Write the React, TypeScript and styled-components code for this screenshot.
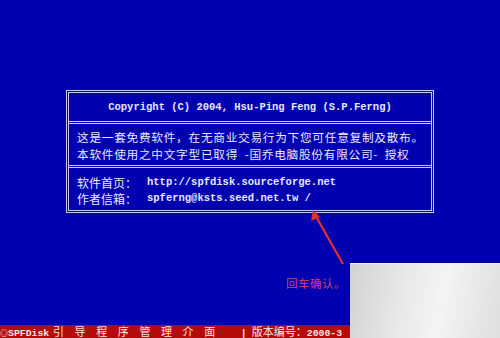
import styled, { createGlobalStyle } from "styled-components";

const GlobalStyle = createGlobalStyle`
  html, body {
    margin: 0;
    padding: 0;
    background: #0000b0;
    overflow: hidden;
  }
`;

const Screen = styled.div`
  position: relative;
  width: 500px;
  height: 338px;
  background: #0000b0;
  display: flex;
  flex-direction: column;
  overflow: hidden;
  font-family: "Liberation Mono", "Noto Sans CJK SC", monospace;
  color: #e8e8ff;
`;

const Dialog = styled.div`
  margin: 90px 0 0 66px;
  width: 368px;
  box-sizing: border-box;
  border: 3px double #c8c8f4;
  display: flex;
  flex-direction: column;
`;

interface SectionProps {
  $height: number;
  $padTop?: number;
  $center?: boolean;
  $divider?: boolean;
}

const Section = styled.div<SectionProps>`
  height: ${(p) => p.$height}px;
  box-sizing: border-box;
  padding: ${(p) => p.$padTop ?? 0}px 0 0 ${(p) => (p.$center ? 0 : 8)}px;
  display: flex;
  flex-direction: column;
  justify-content: ${(p) => (p.$center ? "center" : "flex-start")};
  align-items: ${(p) => (p.$center ? "center" : "flex-start")};
  border-top: ${(p) => (p.$divider ? "3px double #c8c8f4" : "none")};
`;

const Copyright = styled.div`
  font-family: "Liberation Mono", monospace;
  font-weight: bold;
  font-size: 10.5px;
  line-height: 14px;
  white-space: pre;
`;

const CnLine = styled.div`
  font-family: "Noto Sans CJK SC", sans-serif;
  font-size: 11.7px;
  letter-spacing: 0.7px;
  line-height: 17px;
  height: 17px;
  white-space: pre;
`;

const InfoLine = styled.div`
  display: flex;
  align-items: center;
  height: 16px;
  white-space: pre;
`;

const Label = styled.span`
  font-family: "Noto Sans CJK SC", sans-serif;
  font-size: 12px;
  width: 70px;
`;

const Mono = styled.span`
  font-family: "Liberation Mono", monospace;
  font-weight: bold;
  font-size: 10.5px;
`;

const Spacer = styled.div`
  flex: 1;
`;

const StatusBar = styled.div`
  flex-shrink: 0;
  height: 13px;
  width: 350px;
  background: #b40a0a;
  display: flex;
  align-items: flex-end;
  color: #f4e8e8;
  white-space: pre;
`;

const BarRow = styled.div`
  display: flex;
  align-items: baseline;
  margin-bottom: -1px;
`;

const BarMono = styled.span<{ $width?: number; $size?: number; $pad?: number }>`
  flex-shrink: 0;
  font-family: "Liberation Mono", "Noto Sans CJK SC", monospace;
  font-weight: bold;
  font-size: ${(p) => p.$size ?? 9.8}px;
  padding-left: ${(p) => p.$pad ?? 0}px;
  ${(p) => (p.$width ? `width: ${p.$width}px; box-sizing: border-box;` : "")}
`;

const BarCn = styled.span<{ $spacing?: number }>`
  flex-shrink: 0;
  font-family: "Noto Sans CJK SC", sans-serif;
  font-size: 11px;
  letter-spacing: ${(p) => p.$spacing ?? 0}px;
`;

const Annotation = styled.svg`
  position: absolute;
  left: 300px;
  top: 204px;
`;

const Hint = styled.div`
  position: absolute;
  left: 286px;
  top: 275px;
  font-family: "Noto Sans CJK SC", sans-serif;
  font-size: 11.5px;
  color: #d04468;
  letter-spacing: 0.5px;
`;

const Watermark = styled.div`
  position: absolute;
  left: 350px;
  top: 263px;
  width: 150px;
  height: 75px;
  border-top: 1px solid #f2f2d0;
  background: linear-gradient(100deg, #d2d2d2 0%, #e8e8e8 35%, #f4f4f4 60%, #dedede 100%);
`;

export default function App() {
  return (
    <>
      <GlobalStyle />
      <Screen>
        <Dialog>
          <Section $height={28} $center>
            <Copyright>Copyright (C) 2004, Hsu-Ping Feng (S.P.Ferng)</Copyright>
          </Section>
          <Section $height={44} $padTop={4} $divider>
            <CnLine>这是一套免费软件，在无商业交易行为下您可任意复制及散布。</CnLine>
            <CnLine>本软件使用之中文字型已取得  -国乔电脑股份有限公司-  授权</CnLine>
          </Section>
          <Section $height={45} $padTop={6} $divider>
            <InfoLine>
              <Label>软件首页：</Label>
              <Mono>http://spfdisk.sourceforge.net</Mono>
            </InfoLine>
            <InfoLine>
              <Label>作者信箱：</Label>
              <Mono>spferng@ksts.seed.net.tw /</Mono>
            </InfoLine>
          </Section>
        </Dialog>
        <Spacer />
        <StatusBar>
          <BarRow>
            <BarMono $width={8} $size={8}>◎</BarMono>
            <BarMono $width={45}>SPFDisk</BarMono>
            <BarCn $spacing={10.6}>引导程序管理介面</BarCn>
            <BarMono $width={26} $pad={15}>|</BarMono>
            <BarCn>版本编号：</BarCn>
            <BarMono>2000-3</BarMono>
          </BarRow>
        </StatusBar>
        <Annotation width="50" height="64" viewBox="0 0 50 64">
          <line x1="14" y1="9" x2="43" y2="60" stroke="#e0302a" strokeWidth="2.2" />
          <polygon points="13,6 11,17 20,13" fill="#e0302a" />
        </Annotation>
        <Hint>回车确认。</Hint>
        <Watermark />
      </Screen>
    </>
  );
}
